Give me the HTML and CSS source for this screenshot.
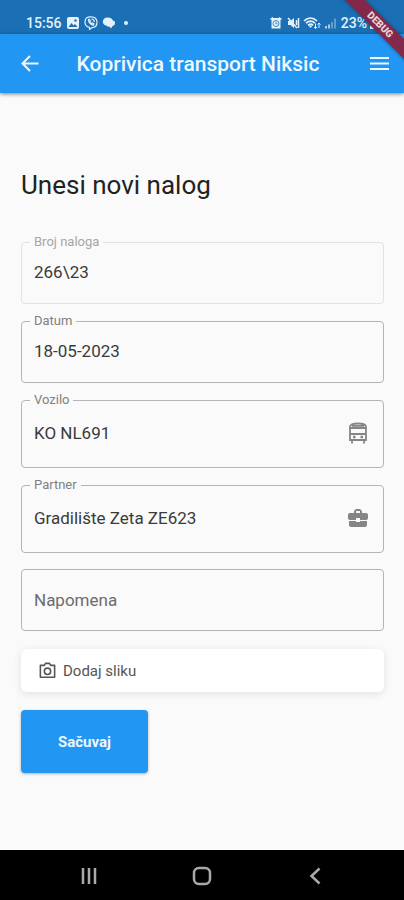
FILE: index.html
```html
<!DOCTYPE html>
<html lang="sr-Latn">
<head>
<meta charset="utf-8">
<meta name="viewport" content="width=device-width, initial-scale=1">
<title>Koprivica transport Niksic</title>
<link rel="stylesheet" href="styles.css">
</head>
<body>
<div class="statusbar">
  <div class="status-group">
    <span class="status-text">15:56</span>
    <svg class="status-icon" viewBox="0 0 14 14"><rect x="1" y="1" width="12" height="12" rx="2" fill="currentColor"/><path d="M2.500 11l3-4 2 2.500 1.500-1.500 2.500 3z" fill="#1b70b5"/><circle cx="9.500" cy="4.500" r="1.200" fill="#1b70b5"/></svg>
    <svg class="status-icon" viewBox="0 0 14 14" fill="none" stroke="currentColor" stroke-width="1.200"><path d="M7 .8c4.500 0 6 1.700 6 5.500s-1.800 5.300-5 5.300l-2.500 2V11.300C2.500 10.800 1 9.600 1 6.300 1 2.500 2.500.8 7 .8z"/><path d="M4.500 3.500c-.8 1.200 1.700 5 4.700 5.700l.8-1.300-1.600-1-.9.600C6.400 6.900 6 6 6 5.700l.5-.5-1-1.800zM7.500 3c1.800.1 2.800 1.200 2.800 3"/></svg>
    <svg class="status-icon" viewBox="0 0 14 14" fill="currentColor"><path d="M5.500 1.500c3 0 4.700 1.200 5.200 2.700 1.500.4 2.300 1.500 2.300 2.800 0 1.800-1.200 2.700-2.500 3L9 12.500l-1.500-2C6 11 5 10.500 4.500 9.500 2.500 9.300.800 7.800.800 5.700S2.800 1.500 5.500 1.500z"/></svg>
    <span class="status-dot"></span>
  </div>
  <div class="status-group status-right">
    <svg class="status-icon" viewBox="0 0 14 14"><path d="M2.500 2h9v10.500h-9z" fill="currentColor"/><path d="M1.500 3.500l2.500-2M12.500 3.500l-2.500-2" stroke="currentColor" stroke-width="1.500"/><circle cx="7" cy="7.500" r="3" fill="none" stroke="#1b70b5" stroke-width=".8"/><path d="M7 5.800v2h1.500" fill="none" stroke="#1b70b5" stroke-width=".8"/></svg>
    <svg class="status-icon" viewBox="0 0 14 14"><path d="M2 5h2.500L8 2v10L4.500 9H2z" fill="currentColor"/><path d="M2 2l9 10M10.500 4v5M12.500 2v10" stroke="currentColor" stroke-width="1.500"/></svg>
    <svg class="status-icon status-icon-wide" viewBox="0 0 18 14"><path d="M1 5c4-4 9-4 13 0M3 7.200c3-2.700 6-2.700 9 0M5 9.300c2-1.500 3.500-1.500 5 0" fill="none" stroke="currentColor" stroke-width="1.700"/><path d="M5.500 9.500h4L7.500 12z" fill="currentColor"/><path d="M12.500 7.500v5M11 11l1.500 1.500L14 11M16 12V7M14.500 8.500L16 7l1.500 1.500" fill="none" stroke="currentColor"/></svg>
    <svg class="status-icon" viewBox="0 0 14 14" stroke="currentColor" stroke-width="2"><path d="M2 12.500v-2.500M5 12.500V8.500" opacity=".7"/><path d="M8 12.500V6M11 12.500V2.500" opacity=".35"/></svg>
    <span class="status-text">23%</span>
    <svg class="status-icon status-icon-battery" viewBox="0 0 10 14"><path d="M0 2h3V1h4v1h3v11H0z" fill="currentColor" opacity=".4"/><path d="M0 10h10v3H0z" fill="currentColor"/></svg>
  </div>
</div>
<header class="appbar">
  <button class="icon-button" type="button" aria-label="Nazad"><svg viewBox="0 0 24 24" width="24" height="24"><path d="M20.500 11.500H5M12 4l-7.500 7.500L12 19" fill="none" stroke="currentColor" stroke-width="2"/></svg></button>
  <h1 class="appbar-title">Koprivica transport Niksic</h1>
  <button class="icon-button" type="button" aria-label="Meni"><svg viewBox="0 0 24 24" width="24" height="24"><path d="M2 6h19M2 11.500h19M2 17h19" stroke="currentColor" stroke-width="2"/></svg></button>
</header>
<div class="debug-corner"><span class="debug-ribbon">DEBUG</span></div>

<main class="content">
  <h2 class="heading">Unesi novi nalog</h2>
  <form class="form">
    <fieldset class="field field-disabled">
      <legend><label for="broj">Broj naloga</label></legend>
      <input id="broj" type="text" value="266\23" disabled>
    </fieldset>
    <fieldset class="field">
      <legend><label for="datum">Datum</label></legend>
      <input id="datum" type="text" value="18-05-2023">
    </fieldset>
    <fieldset class="field field-tall">
      <legend><label for="vozilo">Vozilo</label></legend>
      <div class="field-row">
        <input id="vozilo" type="text" value="KO NL691">
        <svg class="field-icon" viewBox="0 0 24 24" fill="none" stroke="currentColor" stroke-width="1.800"><path d="M4 19V6c0-2.500 2.500-3.500 8-3.500S20 3.500 20 6v13zM4 7h16M4 13h16M6 4.800h12M6 19v3.500M18 19v3.500"/><path d="M7 16h2.500M14.500 16H17" stroke-width="2.400"/></svg>
      </div>
    </fieldset>
    <fieldset class="field field-tall">
      <legend><label for="partner">Partner</label></legend>
      <div class="field-row">
        <input id="partner" type="text" value="Gradilište Zeta ZE623">
        <svg class="field-icon" viewBox="0 0 24 24" fill="currentColor"><path d="M10 16v-1H3.010L3 19c0 1.110.89 2 2 2h14c1.110 0 2-.89 2-2v-4h-7v1h-4zm10-9h-4.010V5l-2-2h-4l-2 2v2H4c-1.100 0-2 .9-2 2v3c0 1.110.89 2 2 2h6v-2h4v2h6c1.100 0 2-.9 2-2V9c0-1.100-.9-2-2-2zm-6 0h-4V5h4v2z"/></svg>
      </div>
    </fieldset>
    <input class="note" type="text" placeholder="Napomena" aria-label="Napomena">
    <button class="photo-button" type="button">
      <svg viewBox="0 0 24 24" width="19" height="19" fill="none" stroke="currentColor" stroke-width="2"><path d="M3 5.500h5l1.500-2.500h5L16 5.500h5v15H3z" stroke-linejoin="round"/><circle cx="12" cy="13" r="4"/></svg>
      <span>Dodaj sliku</span>
    </button>
    <button class="save-button" type="submit">Sačuvaj</button>
  </form>
</main>

<nav class="navbar" aria-label="Sistem">
  <button class="nav-button" type="button" aria-label="Nedavno"><svg viewBox="0 0 20 20" width="20" height="20"><path d="M4 2v16M10 2v16M16 2v16" stroke="currentColor" stroke-width="2.500"/></svg></button>
  <button class="nav-button" type="button" aria-label="Početna"><svg viewBox="0 0 20 20" width="20" height="20"><rect x="2" y="2" width="16" height="16" rx="5" fill="none" stroke="currentColor" stroke-width="2.500"/></svg></button>
  <button class="nav-button" type="button" aria-label="Prethodno"><svg viewBox="0 0 20 20" width="20" height="20"><path d="M14.500 2.500L6.500 10l8 7.500" fill="none" stroke="currentColor" stroke-width="2.500"/></svg></button>
</nav>
</body>
</html>
```
FILE: styles.css
```css
* {
  box-sizing: border-box;
}

body {
  margin: 0;
  min-height: 100vh;
  display: flex;
  flex-direction: column;
  position: relative;
  background: #fafafa;
  color: #333;
  font-family: Roboto, "Liberation Sans", sans-serif;
}

button,
input {
  font: inherit;
  color: inherit;
}

button {
  border: 0;
  padding: 0;
  cursor: pointer;
}

.statusbar {
  height: 34px;
  padding: 12px 24px 0 26px;
  display: flex;
  justify-content: space-between;
  background: #1b70b5;
  color: #e4f1fb;
}

.status-group {
  display: flex;
  align-items: center;
  gap: 4px;
}

.status-right {
  gap: 3px;
}

.status-text {
  font-size: 14px;
  font-weight: 500;
  line-height: 22px;
}

.status-icon {
  width: 14px;
  height: 14px;
}

.status-icon-wide {
  width: 18px;
}

.status-icon-battery {
  width: 10px;
}

.status-dot {
  width: 4px;
  height: 4px;
  margin-left: 4px;
  border-radius: 50%;
  background: currentColor;
}

.appbar {
  height: 59px;
  padding: 0 12px 0 18px;
  display: flex;
  align-items: center;
  background: #2196f3;
  color: #eef8ff;
  box-shadow: 0 1px 4px rgba(0, 0, 0, 0.5);
}

.icon-button {
  display: flex;
  background: none;
}

.appbar-title {
  flex: 1;
  margin: 0;
  padding-right: 14px;
  text-align: center;
  font-size: 21px;
  font-weight: 500;
}

.debug-corner {
  position: absolute;
  top: 0;
  right: 0;
  width: 64px;
  height: 64px;
  overflow: hidden;
}

.debug-ribbon {
  position: absolute;
  top: 18px;
  right: -26px;
  width: 100px;
  background: #82294b;
  color: #e8d3dc;
  font-size: 10px;
  font-weight: 900;
  line-height: 14px;
  text-align: center;
  transform: rotate(45deg);
  box-shadow: 0 0 4px rgba(0, 0, 0, 0.4);
}

.content {
  flex: 1;
  padding: 76px 20px 24px 21px;
}

.heading {
  margin: 0 0 34px;
  color: #222;
  font-size: 26px;
  font-weight: 400;
  line-height: 32px;
}

.form {
  display: flex;
  flex-direction: column;
  gap: 10px;
}

.field {
  min-width: 0;
  height: 69px;
  margin: 0;
  padding: 0 13px 0 8px;
  border: 1px solid #b4b4b4;
  border-radius: 4px;
}

.field-tall {
  height: 75px;
}

.field legend {
  padding: 0 4px;
  color: #808080;
  font-size: 13px;
  line-height: 14px;
}

.field input {
  display: block;
  width: 100%;
  min-width: 0;
  height: 46px;
  padding: 0 4px;
  border: 0;
  outline: 0;
  background: none;
  color: #3a3a3a;
  font-size: 17px;
}

.field-disabled {
  border-color: #e2e2e2;
}

.field-disabled legend {
  color: #a6a6a6;
}

.field-row {
  display: flex;
  align-items: center;
  height: 52px;
}

.field-icon {
  flex: none;
  width: 24px;
  height: 24px;
  color: #858585;
}

.note {
  height: 62px;
  margin-top: 6px;
  padding: 0 12px;
  border: 1px solid #b4b4b4;
  border-radius: 4px;
  outline: 0;
  background: none;
  font-size: 17px;
}

.note::placeholder {
  color: #6c6c6c;
  opacity: 1;
}

.photo-button {
  height: 43px;
  margin-top: 8px;
  padding: 0 17px;
  display: flex;
  align-items: center;
  gap: 6px;
  border-radius: 6px;
  background: #fff;
  color: #555;
  font-size: 15px;
  box-shadow: 0 2px 8px rgba(0, 0, 0, 0.1);
}

.save-button {
  align-self: flex-start;
  height: 63px;
  margin-top: 8px;
  padding: 0 37px;
  border-radius: 4px;
  background: #2196f3;
  color: #f0f8ff;
  font-size: 15px;
  font-weight: 700;
  box-shadow: 0 1px 3px rgba(0, 0, 0, 0.3);
}

.navbar {
  height: 50px;
  padding: 2px 32px 0;
  display: flex;
  background: #000;
  color: #aaa;
}

.nav-button {
  flex: 1;
  display: flex;
  align-items: center;
  justify-content: center;
  background: none;
  color: inherit;
}
```
